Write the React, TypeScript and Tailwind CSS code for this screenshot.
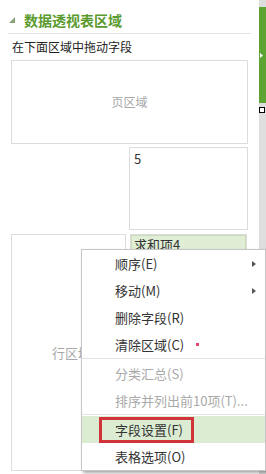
import React from 'react';

const FONT = { fontFamily: '"Noto Sans CJK SC", "Microsoft YaHei", sans-serif' };

type Item = { label: string; disabled?: boolean; sub?: boolean; dot?: boolean; active?: boolean };

const GROUP_A: Item[] = [
  { label: '顺序(E)', sub: true },
  { label: '移动(M)', sub: true },
  { label: '删除字段(R)' },
  { label: '清除区域(C)', dot: true },
];
const GROUP_B: Item[] = [
  { label: '分类汇总(S)', disabled: true },
  { label: '排序并列出前10项(T)...', disabled: true },
];
const GROUP_C: Item[] = [
  { label: '字段设置(F)', active: true },
  { label: '表格选项(O)' },
];

function MenuRow({ item }: { item: Item }) {
  return (
    <div
      className={`relative h-[27px] flex items-center pl-[33px] text-[13px] leading-[16px] ${
        item.disabled ? 'text-[#a9a9a9]' : 'text-[#333]'
      } ${item.active ? 'bg-[#dcecd3]' : ''}`}
    >
      {item.active && (
        <div className="absolute left-[17px] top-[1px] w-[95px] h-[26px] border-[3px] border-[#d13438]" />
      )}
      <span className="relative">{item.label}</span>
      {item.dot && <span className="ml-[12px] w-[3px] h-[3px] bg-[#e0486c]" />}
      {item.sub && (
        <svg className="absolute right-[9px] top-[11px]" width="4" height="6" viewBox="0 0 4 6">
          <polygon points="0,0 4,3 0,6" fill="#555" />
        </svg>
      )}
    </div>
  );
}

function ContextMenu() {
  return (
    <div className="absolute left-[81px] top-[249px] w-[185px] bg-white border border-[#c6c6c6] shadow-[2px_2px_3px_rgba(0,0,0,0.35)]">
      {GROUP_A.map((it) => (
        <MenuRow key={it.label} item={it} />
      ))}
      <div className="h-[2px] border-t border-[#e4e4e4]" />
      {GROUP_B.map((it) => (
        <MenuRow key={it.label} item={it} />
      ))}
      <div className="h-[2px] border-t border-[#e4e4e4]" />
      {GROUP_C.map((it) => (
        <MenuRow key={it.label} item={it} />
      ))}
    </div>
  );
}

export default function App() {
  return (
    <div className="relative w-[266px] h-[474px] overflow-hidden bg-white flex" style={FONT}>
      {/* Field list panel */}
      <div className="w-[259px] flex flex-col">
        {/* Header */}
        <div className="mx-[8px] h-[34px] pt-[7px] border-b border-[#e3e3e3] flex items-center">
          <svg className="ml-[1px]" width="6" height="6" viewBox="0 0 6 6">
            <polygon points="6,0 6,6 0,6" fill="#8aa27a" />
          </svg>
          <span className="ml-[9px] text-[14px] leading-[20px] font-bold text-[#5b9b2e]">数据透视表区域</span>
        </div>

        <div className="mt-[5px] ml-[12px] text-[12px] leading-[16px] text-[#222]">在下面区域中拖动字段</div>

        {/* Page area */}
        <div className="mt-[5px] ml-[11px] w-[237px] h-[84px] border border-[#dcdcdc] flex items-center justify-center text-[12px] text-[#a8a8a8]">
          页区域
        </div>

        {/* Column area */}
        <div className="mt-[3px] ml-[129px] w-[119px] h-[83px] border border-[#dcdcdc] pt-[3px] pl-[4px] text-[13px] leading-[16px] text-[#333]">
          5
        </div>

        {/* Row + values */}
        <div className="mt-[4px] ml-[11px] flex gap-[4px]">
          <div className="w-[115px] h-[237px] border border-[#dcdcdc] flex items-center justify-center text-[13px] text-[#a8a8a8]">
            <span className="ml-[6px]">行区域</span>
          </div>
          <div className="w-[117px] h-[237px] border border-[#dcdcdc]">
            <div className="h-[22px] bg-[#e0eed6] border border-[#cadcbc] pl-[2px] text-[13px] leading-[18px] text-[#333]">
              求和项4
            </div>
          </div>
        </div>
      </div>

      {/* Side bar */}
      <div className="w-[7px] flex flex-col bg-[#dedede]">
        <div className="h-[7px]" />
        <div className="h-[96px] bg-[#5ea433] flex items-center">
          <svg className="ml-[1px]" width="3" height="5" viewBox="0 0 3 5">
            <polygon points="0,0 3,2.5 0,5" fill="#ffffff" />
          </svg>
        </div>
        <div className="h-[4px]" />
        <div className="w-[6px] h-[6px] bg-white border border-black" />
      </div>

      <ContextMenu />
    </div>
  );
}
